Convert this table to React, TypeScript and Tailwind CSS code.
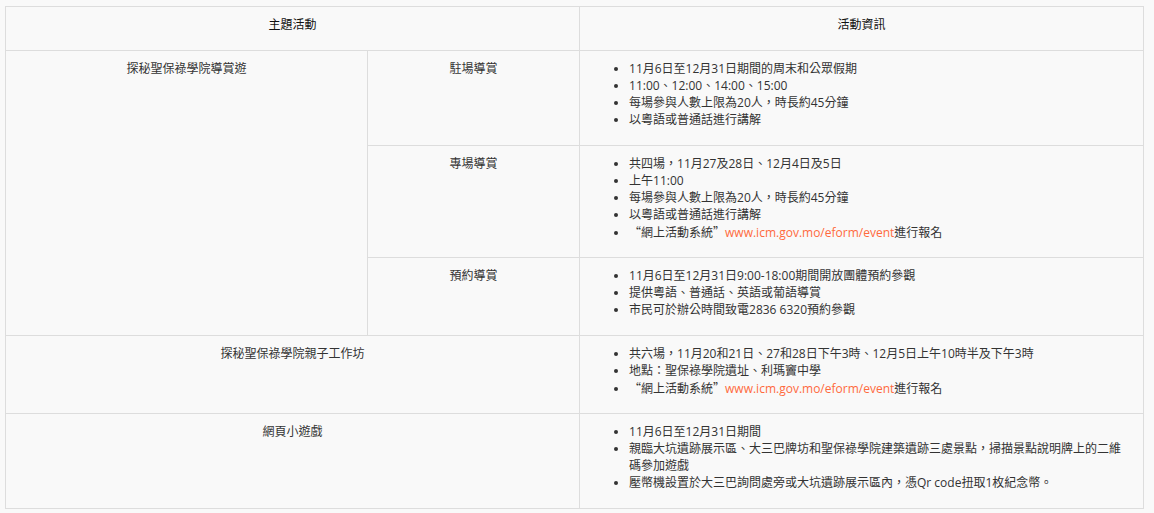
import React from 'react';

const LINK = 'www.icm.gov.mo/eform/event';

const Quote = ({ children }: { children: React.ReactNode }) => (
  <span className="font-['Noto_Sans_CJK_TC',sans-serif]">{children}</span>
);

const Signup = () => (
  <>
    <Quote>“</Quote>網上活動系統<Quote>”</Quote>
    <span className="text-[#ff6a3d]">{LINK}</span>進行報名
  </>
);

// mixed Latin / CJK fallback makes line boxes grow a pixel, so pin each item height
const List = ({ items, tall = -1 }: { items: React.ReactNode[]; tall?: number }) => (
  <ul className="list-disc pl-[40px]">
    {items.map((item, i) => (
      <li key={i} className={i === tall ? 'h-[34px]' : 'h-[17px]'}>
        {item}
      </li>
    ))}
  </ul>
);

const td = 'border border-[#dddddd] pt-[9px] pb-[17px] px-[9px] align-top';

const App = () => {
  return (
    <div className="min-h-screen bg-[#f9f9f9] pl-[5px] pt-[6px] font-['Open_Sans','Noto_Sans_CJK_TC',sans-serif] text-[12px] leading-[17px] text-[#333333]">
      <table className="w-[1139px] table-fixed border-collapse border border-[#dddddd]">
        <colgroup>
          <col className="w-[362px]" />
          <col className="w-[212px]" />
          <col />
        </colgroup>
        <thead>
          <tr className="text-[#111111]">
            <th colSpan={2} className={`${td} font-normal text-center`}>
              <div className="h-[17px]">主題活動</div>
            </th>
            <th className={`${td} font-normal text-center`}>
              <div className="h-[17px]">活動資訊</div>
            </th>
          </tr>
        </thead>
        <tbody>
          <tr>
            <td rowSpan={3} className={`${td} text-center`}>探秘聖保祿學院導賞遊</td>
            <td className={`${td} text-center`}>駐場導賞</td>
            <td className={td}>
              <List
                items={[
                  '11月6日至12月31日期間的周末和公眾假期',
                  '11:00、12:00、14:00、15:00',
                  '每場參與人數上限為20人，時長約45分鐘',
                  '以粵語或普通話進行講解',
                ]}
              />
            </td>
          </tr>
          <tr>
            <td className={`${td} text-center`}>專場導賞</td>
            <td className={td}>
              <List
                items={[
                  '共四場，11月27及28日、12月4日及5日',
                  '上午11:00',
                  '每場參與人數上限為20人，時長約45分鐘',
                  '以粵語或普通話進行講解',
                  <Signup />,
                ]}
              />
            </td>
          </tr>
          <tr>
            <td className={`${td} text-center`}>預約導賞</td>
            <td className={td}>
              <List
                items={[
                  '11月6日至12月31日9:00-18:00期間開放團體預約參觀',
                  '提供粵語、普通話、英語或葡語導賞',
                  '市民可於辦公時間致電2836 6320預約參觀',
                ]}
              />
            </td>
          </tr>
          <tr>
            <td colSpan={2} className={`${td} text-center`}>探秘聖保祿學院親子工作坊</td>
            <td className={td}>
              <List
                items={[
                  '共六場，11月20和21日、27和28日下午3時、12月5日上午10時半及下午3時',
                  '地點：聖保祿學院遺址、利瑪竇中學',
                  <Signup />,
                ]}
              />
            </td>
          </tr>
          <tr>
            <td colSpan={2} className={`${td} text-center`}>網頁小遊戲</td>
            <td className={`${td} pr-[14px]`}>
              <List
                tall={1}
                items={[
                  '11月6日至12月31日期間',
                  '親臨大坑遺跡展示區、大三巴牌坊和聖保祿學院建築遺跡三處景點，掃描景點說明牌上的二維碼參加遊戲',
                  '壓幣機設置於大三巴詢問處旁或大坑遺跡展示區內，憑Qr code扭取1枚紀念幣。',
                ]}
              />
            </td>
          </tr>
        </tbody>
      </table>
    </div>
  );
};

export default App;
